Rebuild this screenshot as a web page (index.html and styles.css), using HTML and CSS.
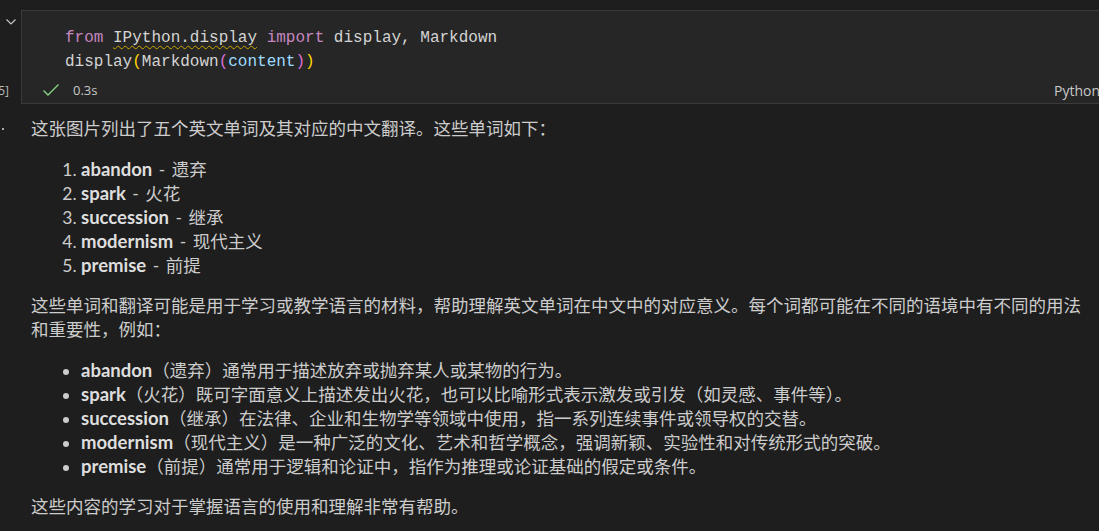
FILE: index.html
```html
<!DOCTYPE html>
<html lang="zh">
<head>
<meta charset="utf-8">
<title>Notebook</title>
<link rel="stylesheet" href="styles.css">
</head>
<body>
<div class="cell">
  <div class="gutter">
    <svg class="chevron" width="12" height="8" viewBox="0 0 12 8"><polyline points="1.5,1.5 6,6 10.5,1.5" fill="none" stroke="#c5c5c5" stroke-width="1.2"/></svg>
    <div class="exec"><span>[5]</span></div>
  </div>
  <div class="editor">
    <div class="code">
      <div class="line"><span class="kw">from</span> <span class="warn">IPython.display</span> <span class="kw">import</span> display, Markdown</div>
      <div class="line">display<span class="p1">(</span>Markdown<span class="p2">(</span><span class="var">content</span><span class="p2">)</span><span class="p1">)</span></div>
    </div>
    <div class="status">
      <svg class="check" width="18" height="14" viewBox="0 0 18 14"><polyline points="1.5,7.5 6,12 16.5,1.5" fill="none" stroke="#89d185" stroke-width="1.4"/></svg>
      <span class="time">0.3s</span>
      <span class="lang">Python</span>
    </div>
  </div>
</div>
<div class="output">
  <span class="dot"></span>
  <div class="md">
    <p>这张图片列出了五个英文单词及其对应的中文翻译。这些单词如下：</p>
    <ol>
      <li><strong>abandon</strong><span class="sep"> - </span>遗弃</li>
      <li><strong>spark</strong><span class="sep"> - </span>火花</li>
      <li><strong>succession</strong><span class="sep"> - </span>继承</li>
      <li><strong>modernism</strong><span class="sep"> - </span>现代主义</li>
      <li><strong>premise</strong><span class="sep"> - </span>前提</li>
    </ol>
    <p>这些单词和翻译可能是用于学习或教学语言的材料，帮助理解英文单词在中文中的对应意义。每个词都可能在不同的语境中有不同的用法和重要性，例如：</p>
    <ul>
      <li><strong>abandon</strong>（遗弃）通常用于描述放弃或抛弃某人或某物的行为。</li>
      <li><strong>spark</strong>（火花）既可字面意义上描述发出火花，也可以比喻形式表示激发或引发（如灵感、事件等）。</li>
      <li><strong>succession</strong>（继承）在法律、企业和生物学等领域中使用，指一系列连续事件或领导权的交替。</li>
      <li><strong>modernism</strong>（现代主义）是一种广泛的文化、艺术和哲学概念，强调新颖、实验性和对传统形式的突破。</li>
      <li><strong>premise</strong>（前提）通常用于逻辑和论证中，指作为推理或论证基础的假定或条件。</li>
    </ul>
    <p>这些内容的学习对于掌握语言的使用和理解非常有帮助。</p>
  </div>
</div>
</body>
</html>
```
FILE: styles.css
```css
html, body {
  margin: 0;
  padding: 0;
  background: #1e1e1e;
  overflow: hidden;
}
body {
  width: 1099px;
  height: 531px;
  font-family: "Lato", "Noto Sans CJK SC", sans-serif;
  color: #cccccc;
}
.cell {
  display: flex;
  padding-top: 10px;
}
.gutter {
  width: 21px;
  display: flex;
  flex-direction: column;
  justify-content: space-between;
  padding: 8px 0 1px;
  box-sizing: border-box;
}
.chevron {
  display: block;
  margin-left: 5px;
}
.exec {
  width: 9px;
  display: flex;
  justify-content: flex-end;
  overflow: hidden;
  font-family: "Open Sans", sans-serif;
  font-size: 12px;
  line-height: 24px;
  color: #b8b8b8;
  white-space: nowrap;
}
.editor {
  flex: 1;
  background: #262626;
  border: 1px solid #3a3a3a;
  border-right: none;
  padding: 15px 0 1px 0;
}
.code {
  padding-left: 43px;
  font-family: "Liberation Mono", monospace;
  font-size: 16px;
  line-height: 24px;
  color: #d4d4d4;
}
.line {
  white-space: pre;
  height: 24px;
}
.kw { color: #c586c0; }
.var { color: #9cdcfe; }
.p1 { color: #ffd700; }
.p2 { color: #da70d6; }
.warn {
  text-decoration: underline wavy #cca700;
  text-decoration-thickness: 1px;
  text-underline-offset: 3px;
}
.status {
  display: flex;
  align-items: center;
  height: 24px;
  margin-top: 4px;
  font-family: "Open Sans", sans-serif;
  font-size: 13px;
  color: #c8c8c8;
}
.check {
  margin-left: 20px;
}
.time {
  margin-left: 13px;
}
.lang {
  margin-left: auto;
  margin-right: -1px;
  font-size: 14px;
}
.output {
  display: flex;
  padding: 13px 12px 0 0;
}
.dot {
  width: 2px;
  height: 2px;
  background: #aaaaaa;
  margin: 11px 27px 0 2px;
  flex: none;
}
.md {
  flex: 1;
  font-size: 17.5px;
  line-height: 24px;
}
.md p {
  margin: 0 0 16.5px;
}
.md ol, .md ul {
  margin: 0 0 16.5px;
  padding-left: 50px;
}
.sep {
  white-space: pre;
  word-spacing: 2px;
}
.md strong {
  font-weight: 700;
  font-size: 18.5px;
  line-height: 1;
  color: #dedede;
}
```
